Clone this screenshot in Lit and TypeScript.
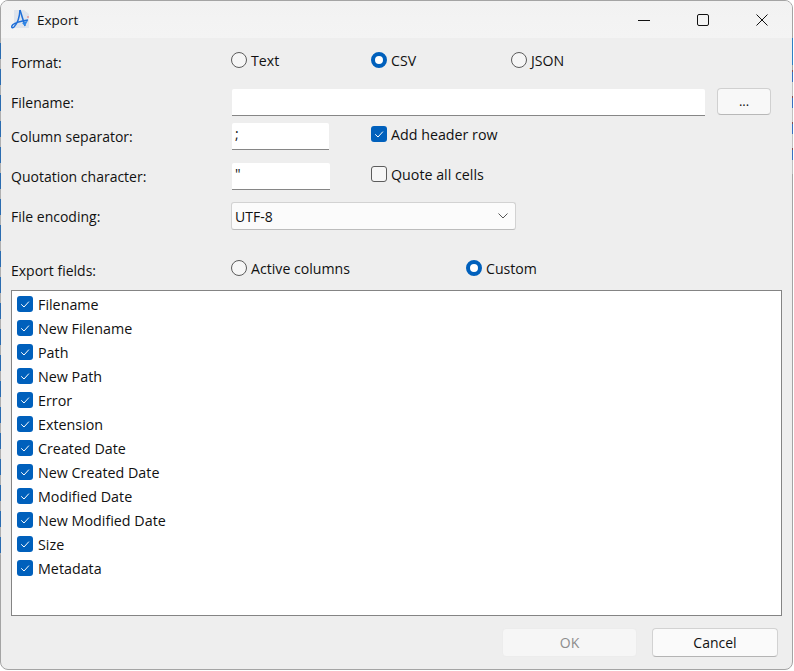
import { LitElement, html, css, svg } from "lit";
import { customElement } from "lit/decorators.js";

const FIELDS = ["Filename","New Filename","Path","New Path","Error","Extension","Created Date","New Created Date","Modified Date","New Modified Date","Size","Metadata"];

const check = svg`<svg class="tick" viewBox="0 0 16 16" width="16" height="16"><path d="M4.2 8.3 L7 11 L11.9 5.6" fill="none" stroke="#fff" stroke-width="1"/></svg>`;

@customElement("app-root")
export class AppRoot extends LitElement {
  static styles = css`
    :host { display:block; position:relative; width:794px; height:671px; background:#fff; overflow:hidden;
      font-family:"Open Sans","Noto Sans",sans-serif; font-size:14px; color:#111; }
    .win { box-sizing:border-box; width:793px; height:670px; background:#eeeeee; border:1px solid #a4a4a4; border-radius:8px; overflow:hidden; display:flex; flex-direction:column; }
    .edge-l { position:absolute; left:0; top:43px; width:1px; height:512px; background:repeating-linear-gradient(#2b6cb0 0 16px, #b0b0b0 16px 26px); }
    .edge-r { position:absolute; left:792px; top:38px; width:1px; height:27px; background:#2f7fc4; }
    .edge-r2 { position:absolute; left:792px; top:70px; width:1px; height:104px; background:repeating-linear-gradient(#8a4a50 0 2px, #3a6fc0 2px 12px, #c0c0c0 12px 26px); }
    .title { height:37px; background:linear-gradient(#f2f2f2, #f4f4f4); display:flex; align-items:center; flex:none; }
    .logo { margin-left:10px; margin-right:7px; flex:none; }
    .ttl { font-size:13.5px; flex:1; }
    .wb { width:59px; height:37px; display:flex; align-items:center; justify-content:center; }
    .wbs { display:flex; margin-right:1px; }
    .body { flex:1; display:flex; flex-direction:column; padding:0 10px; }
    .row { display:grid; grid-template-columns:220px 140px 140px 1fr; align-items:center; }
    .r1 { height:48px; }
    .label { white-space:nowrap; }
    .radio { display:flex; align-items:center; gap:4px; position:relative; top:-2px; font-size:14.15px; }
    .rc { box-sizing:border-box; width:16px; height:16px; border-radius:50%; border:1px solid #5c5c5c; background:#f6f6f6; flex:none; }
    .rc.on { border:4.5px solid #0060bc; background:#fff; }
    .cb { box-sizing:border-box; width:16px; height:16px; border-radius:3px; border:1px solid #5c5c5c; background:#f6f6f6; flex:none; display:block; }
    .cb.on { border:none; background:#0060bc; }
    .tick { display:block; }
    .chk { display:flex; align-items:center; gap:4px; position:relative; top:-2px; font-size:14.25px; }
    .input { box-sizing:border-box; background:#fff; border-bottom:1px solid #868686; border-radius:2px 2px 0 0; padding-left:3px; line-height:22px; }
    .fn { display:flex; align-items:center; height:27px; margin-top:3px; }
    .fn .label { width:221px; flex:none; }
    .fn .input { width:473px; height:27px; }
    .dots { box-sizing:border-box; width:54px; height:27px; margin:-2px 0 0 12px; background:#f8f8f8; border:1px solid #d0d0d0; border-bottom-color:#b8b8b8; border-radius:4px; text-align:center; line-height:24px; font-size:13px; }
    .sep { height:40px; display:flex; align-items:center; }
    .sep .label { width:221px; flex:none; }
    .sep .input { width:97px; height:27px; margin-right:42px; flex:none; }
    .sep.q .input { width:98px; margin-right:41px; }
    .enc { height:40px; display:flex; align-items:center; }
    .enc .label { width:220px; flex:none; }
    .combo { box-sizing:border-box; width:285px; height:28px; background:#fbfbfb; border:1px solid #d2d2d2; border-bottom-color:#bcbcbc; border-radius:3px; display:flex; align-items:center; justify-content:space-between; padding:0 7px 0 3px; }
    .ef { height:40px; margin-top:14px; display:flex; align-items:center; }
    .ef .label { width:220px; flex:none; padding-top:1px; }
    .ef .radio { width:235px; flex:none; }
    .list { box-sizing:border-box; height:326px; width:771px; background:#fff; border:1px solid #848484; padding:1px 5px; flex:none; font-size:14.3px; }
    .item { height:24px; display:flex; align-items:center; gap:5px; }
    .foot { display:flex; justify-content:flex-end; gap:15px; padding:12px 4px 0 0; }
    .btn { box-sizing:border-box; height:29px; border-radius:4px; display:flex; align-items:center; justify-content:center; }
    .ok { width:135px; background:#f6f6f6; color:#8d8d8d; border:1px solid #ececec; }
    .cancel { width:126px; background:#fafafa; border:1px solid #d2d2d2; border-bottom-color:#b4b4b4; }
  `;

  render() {
    const radio = (t: string, on = false) => html`<div class="radio"><span class="rc ${on ? "on" : ""}"></span><span>${t}</span></div>`;
    const cb = (t: string, on = false) => html`<div class="chk"><span class="cb ${on ? "on" : ""}">${on ? check : ""}</span><span>${t}</span></div>`;
    return html`<div class="win">
      <div class="title">
        <svg class="logo" width="19" height="21" viewBox="0 0 19 21">
          <path d="M3 1 H13 L18 5 V19 H3 Z" fill="#dfe4ec"/>
          <path d="M9 1 L14 17" fill="none" stroke="#1f6fd8" stroke-width="1.5"/>
          <path d="M9 1 C8.5 8 6 15 3 18 C0.5 20 0 17.5 2 15.5 C5 13 11 12 17 11" fill="none" stroke="#1f6fd8" stroke-width="1.5"/>
          <path d="M11 14 L17 11.5 L14 17 Z" fill="#2f86e6"/>
          <circle cx="17" cy="8" r="1" fill="#e89a9a"/>
        </svg>
        <span class="ttl">Export</span>
        <div class="wbs">
          <div class="wb"><svg width="12" height="12" viewBox="0 0 12 12"><path d="M0 6.5H12" stroke="#111" stroke-width="1"/></svg></div>
          <div class="wb"><svg width="12" height="12" viewBox="0 0 12 12"><rect x=".5" y=".5" width="11" height="11" rx="1.5" fill="none" stroke="#111"/></svg></div>
          <div class="wb"><svg width="12" height="12" viewBox="0 0 12 12"><path d="M.5 .5L11.5 11.5M11.5 .5L.5 11.5" stroke="#111" stroke-width="1"/></svg></div>
        </div>
      </div>
      <div class="body">
        <div class="row r1"><span class="label">Format:</span>${radio("Text")}${radio("CSV", true)}${radio("JSON")}</div>
        <div class="fn"><span class="label">Filename:</span><div class="input"></div><div class="dots">...</div></div>
        <div class="sep"><span class="label">Column separator:</span><div class="input">;</div>${cb("Add header row", true)}</div>
        <div class="sep q"><span class="label">Quotation character:</span><div class="input">"</div>${cb("Quote all cells")}</div>
        <div class="enc"><span class="label">File encoding:</span>
          <div class="combo"><span>UTF-8</span><svg width="10" height="6" viewBox="0 0 10 6"><path d="M.5 .5L5 5L9.5 .5" fill="none" stroke="#555"/></svg></div>
        </div>
        <div class="ef"><span class="label">Export fields:</span>${radio("Active columns")}${radio("Custom", true)}</div>
        <div class="list">${FIELDS.map((f) => html`<div class="item"><span class="cb on">${check}</span><span>${f}</span></div>`)}</div>
        <div class="foot"><div class="btn ok">OK</div><div class="btn cancel">Cancel</div></div>
      </div>
    </div>
    <div class="edge-l"></div><div class="edge-r"></div><div class="edge-r2"></div>`;
  }
}
